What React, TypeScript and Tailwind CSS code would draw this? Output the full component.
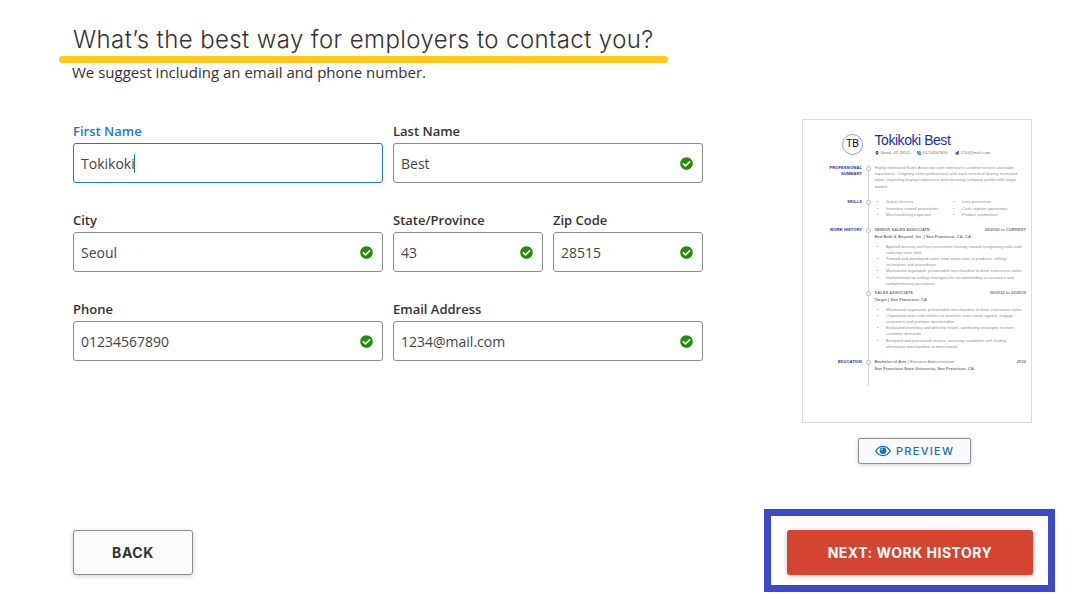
import { FaCheckCircle, FaMapMarkerAlt } from 'react-icons/fa';
import { FaPhoneVolume, FaPaperPlane } from 'react-icons/fa6';

type FieldProps = {
  label: string;
  value: string;
  width: string;
  active?: boolean;
};

const Field = ({ label, value, width, active }: FieldProps) => {
  return (
    <div className={`flex flex-col ${width}`}>
      <div
        className={`h-[22px] text-[13px] leading-5 font-[560] whitespace-nowrap ${
          active ? 'text-[#1e7cb8]' : 'text-[#333]'
        }`}
      >
        {label}
      </div>
      <div
        className={`h-10 flex items-center justify-between rounded-[3px] border pl-[7px] pr-2.5 text-sm text-[#444] ${
          active ? 'border-[#1e7cb8]' : 'border-[#8e8e8e]'
        }`}
      >
        <div className="flex items-center">
          <span className="pt-0.5">{value}</span>
          {active && <span className="-ml-px h-[19px] w-px bg-[#1e7cb8]" />}
        </div>
        {!active && <FaCheckCircle className="size-[13px] -mr-px text-[#2a8a0e]" />}
      </div>
    </div>
  );
};

const Dot = () => (
  <span className="absolute -left-[8.5px] top-[1px] size-[5px] rounded-full border border-[#bdbdbd] bg-white" />
);

const Section = ({
  title,
  height,
  children,
}: {
  title: string[];
  height: string;
  children: React.ReactNode;
}) => {
  return (
    <div className={`flex ${height}`}>
      <div className="w-[59px] text-right leading-[6.5px] font-bold text-[#1c2f9c]">
        {title.map((t) => (
          <div key={t}>{t}</div>
        ))}
      </div>
      <div className="ml-[6px] w-px bg-[#d4d4d4]" />
      <div className="relative ml-[5.5px] w-[151.5px]">
        <Dot />
        {children}
      </div>
    </div>
  );
};

const Bullets = ({ items }: { items: string[][] }) => {
  return (
    <div className="text-[#8c8c8c]">
      {items.map((lines) => (
        <div key={lines[0]} className="flex">
          <div className="w-[11.5px] pl-[2.5px]">•</div>
          <div>
            {lines.map((line) => (
              <div key={line}>{line}</div>
            ))}
          </div>
        </div>
      ))}
    </div>
  );
};

const Job = ({ title, dates, company }: { title: string; dates: string; company: string }) => {
  return (
    <div className="h-[17px] font-bold text-[#777]">
      <div className="flex justify-between">
        <span>{title}</span>
        <span className="italic">{dates}</span>
      </div>
      <div className="mt-[1.5px]">{company}</div>
    </div>
  );
};

const Resume = () => {
  return (
    <div className="h-[304px] w-[230px] border border-[#dcdcdc] bg-white font-['Liberation_Sans',sans-serif] text-[4px] leading-[6.2px] tracking-[0.07px] whitespace-nowrap">
      <div className="flex h-[44.5px] pt-[13px] pl-[38px]">
        <div className="mt-px ml-px flex size-[21px] items-center justify-center rounded-full border border-[#8d99cf] text-[10px] tracking-[-0.2px] text-black">
          TB
        </div>
        <div className="ml-[11.5px]">
          <div className="text-[14px] leading-[15px] tracking-[-0.45px] text-[#1c2f9c]">
            Tokikoki Best
          </div>
          <div className="mt-[1.500px] flex items-center text-[#777]">
            <FaMapMarkerAlt className="size-1 text-[#1c3f9c]" />
            <span className="ml-[2px] w-[36px]">Seoul, 43 28515</span>
            <FaPhoneVolume className="size-1 text-[#1c3f9c]" />
            <span className="ml-[2px] w-[32px]">01234567890</span>
            <FaPaperPlane className="size-1 text-[#1c3f9c]" />
            <span className="ml-[2px]">1234@mail.com</span>
          </div>
        </div>
      </div>

      <Section title={['PROFESSIONAL', 'SUMMARY']} height="h-[34.5px]">
        <div className="text-[#8c8c8c] leading-[6.4px]">
          <div>Highly motivated Sales Associate with extensive customer service and sales</div>
          <div>experience. Outgoing sales professional with track record of driving increased</div>
          <div>sales, improving buying experience and elevating company profile with target</div>
          <div>market.</div>
        </div>
      </Section>
      <Section title={['SKILLS']} height="h-[27.5px]">
        <div className="flex leading-[6.5px]">
          <div className="w-[76px]">
            <Bullets
              items={[['Guest services'], ['Inventory control procedures'], ['Merchandising expertise']]}
            />
          </div>
          <Bullets items={[['Loss prevention'], ['Cash register operations'], ['Product promotions']]} />
        </div>
      </Section>
      <Section title={['WORK HISTORY']} height="h-[132px]">
        <Job
          title="SENIOR SALES ASSOCIATE"
          dates="02/2016 to CURRENT"
          company="Bed Bath & Beyond, Inc. | San Francisco, CA, CA"
        />
        <div className="h-[46px]">
          <Bullets
            items={[
              [
                'Applied security and loss prevention training toward recognizing risks and',
                'reducing store theft',
              ],
              [
                'Trained and developed sales team associates in products, selling',
                'techniques and procedures',
              ],
              ['Maintained organized, presentable merchandise to drive continuous sales'],
              [
                'Implemented up-selling strategies for recommending accessories and',
                'complementary purchases',
              ],
            ]}
          />
        </div>
        <div className="relative">
          <Dot />
          <Job title="SALES ASSOCIATE" dates="06/2012 to 02/2016" company="Target | San Francisco, CA" />
        </div>
        <Bullets
          items={[
            ['Maintained organized, presentable merchandise to drive continuous sales'],
            [
              'Organized racks and shelves to maintain store visual appeal, engage',
              'customers and promote merchandise',
            ],
            [
              'Evaluated inventory and delivery needs, optimizing strategies to meet',
              'customer demands',
            ],
            [
              'Analyzed and processed returns, assisting customers with finding',
              'alternative merchandise to meet needs',
            ],
          ]}
        />
      </Section>
      <Section title={['EDUCATION']} height="h-[27.5px]">
        <div className="flex justify-between text-[#777]">
          <span>
            <b>Bachelor of Arts</b> | Business Administration
          </span>
          <b className="italic">2012</b>
        </div>
        <div className="mt-[0.8px] font-bold text-[#777]">
          San Francisco State University, San Francisco, CA
        </div>
      </Section>
    </div>
  );
};

const App = () => {
  return (
    <div className="h-[613px] w-[1088px] overflow-hidden bg-white font-['Open_Sans',sans-serif]">
      <div className="flex h-[509px]">
        <div className="w-[644px] ml-[59px] pt-[25px]">
          <h1 className="ml-[14px] h-[31px] text-[24px] leading-[30px] font-light tracking-[0.4px] whitespace-nowrap text-[#333] font-['Inter',sans-serif]">
            What’s the best way for employers to contact you?
          </h1>
          <div className="h-[7px] w-[609px] rounded-full bg-[#ffc91c]" />
          <p className="ml-[13px] h-[58px] text-[15px] leading-[19px] text-[#333]">
            We suggest including an email and phone number.
          </p>
          <div className="ml-[14px] flex flex-col gap-[27px]">
            <div className="flex gap-2.5">
              <Field label="First Name" value="Tokikoki" width="w-[310px]" active />
              <Field label="Last Name" value="Best" width="w-[310px]" />
            </div>
            <div className="flex gap-2.5">
              <Field label="City" value="Seoul" width="w-[310px]" />
              <Field label="State/Province" value="43" width="w-[150px]" />
              <Field label="Zip Code" value="28515" width="w-[150px]" />
            </div>
            <div className="flex gap-2.5">
              <Field label="Phone" value="01234567890" width="w-[310px]" />
              <Field label="Email Address" value="1234@mail.com" width="w-[310px]" />
            </div>
          </div>
        </div>

        <div className="ml-[99px] pt-[119px]">
          <Resume />
          <button className="mt-[15px] ml-[56px] flex h-[26px] w-[113px] items-center rounded-[2px] border border-[#8e8e8e] bg-[#f7f9fc] pl-4 text-[#1a6fb0] shadow-[0_1px_4px_rgba(0,0,0,0.2)]">
            <svg viewBox="0 0 16 12" className="h-3 w-4" fill="none">
              <path
                d="M0.8 6C2.6 2.9 5 1.4 8 1.4S13.4 2.9 15.2 6C13.4 9.1 11 10.6 8 10.6S2.6 9.1 0.8 6Z"
                stroke="currentColor"
                strokeWidth="1.3"
              />
              <circle cx="8" cy="5.8" r="3.3" fill="currentColor" />
              <path d="M6.3 5.6A1.8 1.8 0 0 1 8 4" stroke="#fff" strokeWidth="0.8" />
            </svg>
            <span className="ml-[5px] text-[11px] font-medium tracking-[1.3px] font-['Inter',sans-serif]">
              PREVIEW
            </span>
          </button>
        </div>
      </div>

      <div className="flex items-start">
        <button className="mt-[21px] ml-[73px] h-[45px] w-[120px] rounded-[3px] border border-[#8e8e8e] bg-[#fbfbfb] text-sm font-bold tracking-[0.6px] text-[#333] shadow-[0_1px_5px_rgba(0,0,0,0.2)] font-['Inter',sans-serif]">
          BACK
        </button>
        <div className="ml-[571px] h-[83px] w-[291px] border-[7px] border-[#3f48cc] pt-[14px] pl-[16px]">
          <button className="h-[45px] w-[246px] rounded-[3px] bg-[#d34532] text-sm font-bold tracking-[0.5px] whitespace-nowrap text-white shadow-[0_1px_5px_rgba(0,0,0,0.25)] font-['Inter',sans-serif]">
            NEXT: WORK HISTORY
          </button>
        </div>
      </div>
    </div>
  );
};

export default App;
